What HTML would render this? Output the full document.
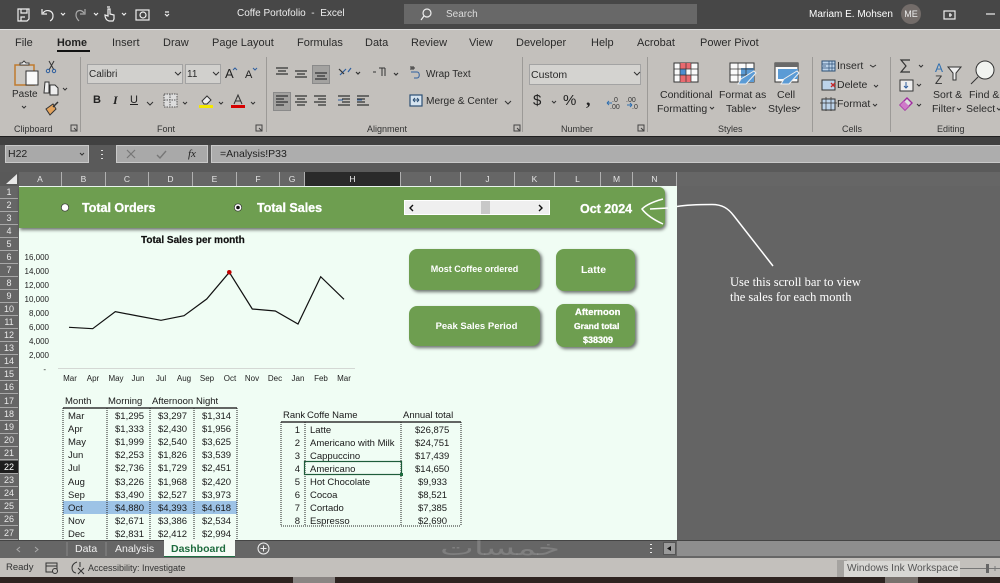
<!DOCTYPE html>
<html lang="en"><head><meta charset="utf-8"><title>Coffe Portofolio - Excel</title>
<style>
html,body{margin:0;padding:0}
body{width:1000px;height:583px;overflow:hidden;position:relative;background:#646464;font-family:"Liberation Sans",sans-serif;color:#222}
.b{position:absolute}
.t{position:absolute;white-space:nowrap;line-height:14px;font-size:10.5px}
.tab{font-size:11px;color:#2a2a2a;top:36px}
.g{font-size:9px;color:#333;top:122px}
.r{font-size:10.5px;color:#2a2a2a}
.rh{position:absolute;left:0;width:18px;height:12px;background:#666;border-bottom:1px solid #a8a8a8;color:#e8e8e8;font-size:9px;line-height:12px;text-align:center}
.ch{position:absolute;top:172px;height:14px;line-height:14px;color:#e4e4e4;font-size:8.5px;text-align:center;border-right:1px solid #b0b0b0;box-sizing:border-box}
.card{position:absolute;background:#6e9e50;border-radius:8px;box-shadow:2px 2px 3px rgba(0,0,0,.55);color:#fff;font-weight:bold;text-align:center}
.w{color:#fff;font-weight:bold;-webkit-text-stroke:.3px #fff}
.c{font-size:9.5px;color:#1a1a1a;transform:translateY(1px)}
.rgt{text-align:right}
.yl{width:40px;left:9px;text-align:right;font-size:8px;color:#222;transform:translateY(1px)}
.xl{width:24px;text-align:center;font-size:8px;color:#222;top:372px}
svg{position:absolute;left:0;top:0}
</style></head><body>

<!-- title bar -->
<div class="b" style="left:0;top:0;width:1000px;height:29px;background:#474747"></div>
<div class="b" style="left:404px;top:4px;width:293px;height:20px;background:#686868"></div>
<div class="t" style="left:237px;top:7px;color:#eee;font-size:10px">Coffe Portofolio&nbsp; -&nbsp; Excel</div>
<div class="t" style="left:446px;top:8px;color:#ddd;font-size:10px">Search</div>
<div class="t" style="left:809px;top:8px;color:#fff;font-size:10px">Mariam E. Mohsen</div>
<div class="b" style="left:901px;top:4px;width:20px;height:20px;border-radius:50%;background:#736c69;color:#eee;font-size:9px;line-height:20px;text-align:center">ME</div>

<!-- ribbon -->
<div class="b" style="left:0;top:29px;width:1000px;height:107px;background:#c3c0bc;border-top:1px solid #ddd;box-sizing:border-box"></div>
<div class="b" style="left:0;top:136px;width:1000px;height:9px;background:#414141;border-top:1px solid #1f1f1f;box-sizing:border-box"></div>
<div class="t tab" style="left:15px">File</div>
<div class="t tab" style="left:57px;font-weight:bold;color:#222;font-size:10.8px">Home</div>
<div class="b" style="left:57px;top:50px;width:33px;height:2px;background:#111"></div>
<div class="t tab" style="left:112px">Insert</div>
<div class="t tab" style="left:163px">Draw</div>
<div class="t tab" style="left:212px">Page Layout</div>
<div class="t tab" style="left:297px">Formulas</div>
<div class="t tab" style="left:365px">Data</div>
<div class="t tab" style="left:411px">Review</div>
<div class="t tab" style="left:469px">View</div>
<div class="t tab" style="left:516px">Developer</div>
<div class="t tab" style="left:591px">Help</div>
<div class="t tab" style="left:637px">Acrobat</div>
<div class="t tab" style="left:700px">Power Pivot</div>

<!-- ribbon separators -->
<div class="b" style="left:80px;top:57px;width:1px;height:75px;background:#9c9a97"></div>
<div class="b" style="left:266px;top:57px;width:1px;height:75px;background:#9c9a97"></div>
<div class="b" style="left:522px;top:57px;width:1px;height:75px;background:#9c9a97"></div>
<div class="b" style="left:647px;top:57px;width:1px;height:75px;background:#9c9a97"></div>
<div class="b" style="left:812px;top:57px;width:1px;height:75px;background:#9c9a97"></div>
<div class="b" style="left:890px;top:57px;width:1px;height:75px;background:#9c9a97"></div>

<!-- ribbon controls -->
<div class="b" style="left:87px;top:64px;width:96px;height:20px;background:#d1d0cd;border:1px solid #a3a3a3;box-sizing:border-box"></div>
<div class="b" style="left:185px;top:64px;width:36px;height:20px;background:#d1d0cd;border:1px solid #a3a3a3;box-sizing:border-box"></div>
<div class="b" style="left:529px;top:64px;width:112px;height:21px;background:#d4d3d0;border:1px solid #a3a3a3;box-sizing:border-box"></div>
<div class="b" style="left:312px;top:65px;width:18px;height:19px;background:#a3a2a0;border:1px solid #8a8a8a;box-sizing:border-box"></div>
<div class="b" style="left:273px;top:92px;width:18px;height:19px;background:#a3a2a0;border:1px solid #8a8a8a;box-sizing:border-box"></div>

<div class="t r" style="left:89px;top:68px;font-size:10px">Calibri</div>
<div class="t r" style="left:187px;top:68px;font-size:10px">11</div>
<div class="t r" style="left:531px;top:68px;font-size:10.5px">Custom</div>
<div class="t r" style="left:426px;top:68px;font-size:10px">Wrap Text</div>
<div class="t r" style="left:426px;top:95px;font-size:10.2px">Merge &amp; Center</div>
<div class="t r" style="left:12px;top:88px;font-size:10px">Paste</div>
<div class="t" style="left:93px;top:93px;font-weight:bold;font-size:11px">B</div>
<div class="t" style="left:113px;top:93px;font-style:italic;font-family:'Liberation Serif',serif;font-size:12px;font-weight:bold">I</div>
<div class="t" style="left:130px;top:93px;font-size:11px;text-decoration:underline">U</div>
<div class="t" style="left:225px;top:67px;font-size:13px">A</div>
<div class="t" style="left:245px;top:68px;font-size:11px">A</div>
<div class="t" style="left:533px;top:94px;font-size:15px">$</div>
<div class="t" style="left:563px;top:94px;font-size:15px">%</div>
<div class="t" style="left:586px;top:92px;font-size:18px;font-weight:bold;font-family:'Liberation Serif',serif">,</div>

<div class="t r" style="left:660px;top:88px;font-size:10.5px">Conditional</div>
<div class="t r" style="left:657px;top:102px;font-size:10.5px">Formatting</div>
<div class="t r" style="left:719px;top:88px;font-size:10.5px">Format as</div>
<div class="t r" style="left:726px;top:102px;font-size:10.5px">Table</div>
<div class="t r" style="left:777px;top:88px;font-size:10.5px">Cell</div>
<div class="t r" style="left:768px;top:102px;font-size:10.5px">Styles</div>
<div class="t r" style="left:837px;top:59px;font-size:10.5px">Insert</div>
<div class="t r" style="left:837px;top:78px;font-size:10.5px">Delete</div>
<div class="t r" style="left:837px;top:97px;font-size:10.5px">Format</div>
<div class="t r" style="left:933px;top:88px;font-size:10.5px">Sort &amp;</div>
<div class="t r" style="left:932px;top:102px;font-size:10.5px">Filter</div>
<div class="t r" style="left:969px;top:88px;font-size:10.5px">Find &amp;</div>
<div class="t r" style="left:966px;top:102px;font-size:10.5px">Select</div>

<div class="t g" style="left:14px">Clipboard</div>
<div class="t g" style="left:157px">Font</div>
<div class="t g" style="left:367px">Alignment</div>
<div class="t g" style="left:561px">Number</div>
<div class="t g" style="left:718px">Styles</div>
<div class="t g" style="left:842px">Cells</div>
<div class="t g" style="left:937px">Editing</div>

<!-- formula bar -->
<div class="b" style="left:0;top:145px;width:1000px;height:27px;background:#5a5a5a"></div>
<div class="b" style="left:5px;top:145px;width:84px;height:18px;background:#a9a9a9;border:1px solid #c9c9c9;box-sizing:border-box"></div>
<div class="b" style="left:116px;top:145px;width:92px;height:18px;background:#a9a9a9;border:1px solid #c9c9c9;box-sizing:border-box"></div>
<div class="b" style="left:211px;top:145px;width:789px;height:18px;background:#adadad;border:1px solid #c9c9c9;border-right:0;box-sizing:border-box"></div>
<div class="t" style="left:8px;top:147px;font-size:10.5px;color:#222">H22</div>
<div class="t" style="left:220px;top:147px;font-size:10.5px;color:#222">=Analysis!P33</div>
<div class="t" style="left:188px;top:147px;font-size:11px;font-style:italic;font-family:'Liberation Serif',serif;color:#222">fx</div>

<!-- grid headers -->
<div class="b" style="left:0;top:172px;width:1000px;height:14px;background:#666"></div>
<div class="b" style="left:0;top:172px;width:19px;height:14px;background:#595959"></div>
<div class="ch" style="left:19px;width:43px">A</div>
<div class="ch" style="left:62px;width:44px">B</div>
<div class="ch" style="left:106px;width:43px">C</div>
<div class="ch" style="left:149px;width:44px">D</div>
<div class="ch" style="left:193px;width:44px">E</div>
<div class="ch" style="left:237px;width:43px">F</div>
<div class="ch" style="left:280px;width:25px">G</div>
<div class="ch" style="left:305px;width:96px;background:#2a2a2a;color:#eee;padding-left:0">H</div>
<div class="ch" style="left:401px;width:60px">I</div>
<div class="ch" style="left:461px;width:54px">J</div>
<div class="ch" style="left:515px;width:40px">K</div>
<div class="ch" style="left:555px;width:46px">L</div>
<div class="ch" style="left:601px;width:32px">M</div>
<div class="ch" style="left:633px;width:44px">N</div>

<!-- row headers -->
<div class="rh" style="top:186px">1</div><div class="rh" style="top:199px">2</div><div class="rh" style="top:212px">3</div><div class="rh" style="top:225px">4</div><div class="rh" style="top:238px">5</div><div class="rh" style="top:251px">6</div><div class="rh" style="top:264px">7</div><div class="rh" style="top:277px">8</div><div class="rh" style="top:290px">9</div><div class="rh" style="top:303px">10</div><div class="rh" style="top:316px">11</div><div class="rh" style="top:329px">12</div><div class="rh" style="top:342px">13</div><div class="rh" style="top:355px">14</div><div class="rh" style="top:368px">15</div><div class="rh" style="top:381px">16</div><div class="rh" style="top:395px">17</div><div class="rh" style="top:408px">18</div><div class="rh" style="top:421px">19</div><div class="rh" style="top:434px">20</div><div class="rh" style="top:447px">21</div><div class="rh" style="top:461px;background:#1e1e1e;color:#fff">22</div><div class="rh" style="top:474px">23</div><div class="rh" style="top:487px">24</div><div class="rh" style="top:500px">25</div><div class="rh" style="top:513px">26</div><div class="rh" style="top:527px">27</div>

<!-- sheet -->
<div class="b" style="left:19px;top:186px;width:658px;height:354px;background:#f0fdf4"></div>
<div class="b" style="left:19px;top:187px;width:646px;height:41px;background:#6e9e50;border-radius:0 6px 6px 0;box-shadow:1px 2px 3px rgba(0,0,0,.55)"></div>

<div class="t w" style="left:82px;top:201px;font-size:12.5px">Total Orders</div>
<div class="t w" style="left:257px;top:201px;font-size:12.5px">Total Sales</div>
<div class="t w" style="left:580px;top:202px;font-size:12.5px">Oct 2024</div>
<div class="b" style="left:404px;top:200px;width:146px;height:15px;background:#efefef;box-sizing:border-box;border:1px solid #fff"></div>
<div class="b" style="left:481px;top:201px;width:9px;height:13px;background:#c8c8c8"></div>

<!-- cards -->
<div class="card" style="left:409px;top:249px;width:131px;height:41px;line-height:41px;font-size:9px">Most Coffee ordered</div>
<div class="card" style="left:556px;top:249px;width:79px;height:42px;line-height:40px;font-size:10.5px;padding-right:4px;box-sizing:border-box"><span style="position:relative;top:1px">Latte</span></div>
<div class="card" style="left:409px;top:306px;width:131px;height:40px;line-height:39px;font-size:9.500px;padding-left:4px;box-sizing:border-box"><span style="position:relative;top:1px">Peak Sales Period</span></div>
<div class="card" style="left:556px;top:304px;width:79px;height:43px"></div>
<div class="t w" style="left:575px;top:306px;font-size:9.5px">Afternoon</div>
<div class="t w" style="left:574px;top:319px;font-size:8.5px">Grand total</div>
<div class="t w" style="left:583px;top:333px;font-size:9px">$38309</div>

<!-- chart text -->
<div class="t" style="left:141px;top:234px;font-weight:bold;font-size:10px;color:#111;-webkit-text-stroke:.2px #111">Total Sales per month</div>
<div class="t yl" style="top:250px">16,000</div><div class="t yl" style="top:264px">14,000</div><div class="t yl" style="top:278px">12,000</div><div class="t yl" style="top:292px">10,000</div><div class="t yl" style="top:306px">8,000</div><div class="t yl" style="top:320px">6,000</div><div class="t yl" style="top:334px">4,000</div><div class="t yl" style="top:348px">2,000</div><div class="t yl" style="top:362px;left:6px">-</div>
<div class="t xl" style="left:58px">Mar</div><div class="t xl" style="left:81px">Apr</div><div class="t xl" style="left:104px">May</div><div class="t xl" style="left:126px">Jun</div><div class="t xl" style="left:149px">Jul</div><div class="t xl" style="left:172px">Aug</div><div class="t xl" style="left:195px">Sep</div><div class="t xl" style="left:218px">Oct</div><div class="t xl" style="left:240px">Nov</div><div class="t xl" style="left:263px">Dec</div><div class="t xl" style="left:286px">Jan</div><div class="t xl" style="left:309px">Feb</div><div class="t xl" style="left:332px">Mar</div>

<!-- left table -->
<div class="b" style="left:63px;top:501px;width:174px;height:13px;background:#9dc3e6"></div>
<div class="t c" style="left:65px;top:394px">Month</div><div class="t c" style="left:108px;top:394px">Morning</div><div class="t c" style="left:152px;top:394px">Afternoon</div><div class="t c" style="left:196px;top:394px">Night</div>
<div class="t c" style="left:68px;top:409px">Mar</div><div class="t c" style="left:68px;top:422px">Apr</div><div class="t c" style="left:68px;top:435px">May</div><div class="t c" style="left:68px;top:448px">Jun</div><div class="t c" style="left:68px;top:461px">Jul</div><div class="t c" style="left:68px;top:475px">Aug</div><div class="t c" style="left:68px;top:488px">Sep</div><div class="t c" style="left:68px;top:501px">Oct</div><div class="t c" style="left:68px;top:514px">Nov</div><div class="t c" style="left:68px;top:527px">Dec</div>
<div class="t c" style="left:115px;top:409px">$1,295</div><div class="t c" style="left:158px;top:409px">$3,297</div><div class="t c" style="left:202px;top:409px">$1,314</div>
<div class="t c" style="left:115px;top:422px">$1,333</div><div class="t c" style="left:158px;top:422px">$2,430</div><div class="t c" style="left:202px;top:422px">$1,956</div>
<div class="t c" style="left:115px;top:435px">$1,999</div><div class="t c" style="left:158px;top:435px">$2,540</div><div class="t c" style="left:202px;top:435px">$3,625</div>
<div class="t c" style="left:115px;top:448px">$2,253</div><div class="t c" style="left:158px;top:448px">$1,826</div><div class="t c" style="left:202px;top:448px">$3,539</div>
<div class="t c" style="left:115px;top:461px">$2,736</div><div class="t c" style="left:158px;top:461px">$1,729</div><div class="t c" style="left:202px;top:461px">$2,451</div>
<div class="t c" style="left:115px;top:475px">$3,226</div><div class="t c" style="left:158px;top:475px">$1,968</div><div class="t c" style="left:202px;top:475px">$2,420</div>
<div class="t c" style="left:115px;top:488px">$3,490</div><div class="t c" style="left:158px;top:488px">$2,527</div><div class="t c" style="left:202px;top:488px">$3,973</div>
<div class="t c" style="left:115px;top:501px">$4,880</div><div class="t c" style="left:158px;top:501px">$4,393</div><div class="t c" style="left:202px;top:501px">$4,618</div>
<div class="t c" style="left:115px;top:514px">$2,671</div><div class="t c" style="left:158px;top:514px">$3,386</div><div class="t c" style="left:202px;top:514px">$2,534</div>
<div class="t c" style="left:115px;top:527px">$2,831</div><div class="t c" style="left:158px;top:527px">$2,412</div><div class="t c" style="left:202px;top:527px">$2,994</div>

<!-- right table -->
<div class="t c" style="left:283px;top:408px">Rank</div><div class="t c" style="left:307px;top:408px">Coffe Name</div><div class="t c" style="left:403px;top:408px">Annual total</div>
<div class="t c rgt" style="left:280px;width:20px;top:423px">1</div><div class="t c" style="left:310px;top:423px">Latte</div><div class="t c" style="left:415px;top:423px">$26,875</div>
<div class="t c rgt" style="left:280px;width:20px;top:436px">2</div><div class="t c" style="left:310px;top:436px">Americano with Milk</div><div class="t c" style="left:415px;top:436px">$24,751</div>
<div class="t c rgt" style="left:280px;width:20px;top:449px">3</div><div class="t c" style="left:310px;top:449px">Cappuccino</div><div class="t c" style="left:415px;top:449px">$17,439</div>
<div class="t c rgt" style="left:280px;width:20px;top:462px">4</div><div class="t c" style="left:310px;top:462px">Americano</div><div class="t c" style="left:415px;top:462px">$14,650</div>
<div class="t c rgt" style="left:280px;width:20px;top:475px">5</div><div class="t c" style="left:310px;top:475px">Hot Chocolate</div><div class="t c" style="left:418px;top:475px">$9,933</div>
<div class="t c rgt" style="left:280px;width:20px;top:488px">6</div><div class="t c" style="left:310px;top:488px">Cocoa</div><div class="t c" style="left:418px;top:488px">$8,521</div>
<div class="t c rgt" style="left:280px;width:20px;top:501px">7</div><div class="t c" style="left:310px;top:501px">Cortado</div><div class="t c" style="left:418px;top:501px">$7,385</div>
<div class="t c rgt" style="left:280px;width:20px;top:514px">8</div><div class="t c" style="left:310px;top:514px">Espresso</div><div class="t c" style="left:418px;top:514px">$2,690</div>

<!-- annotation -->
<div class="t" style="left:730px;top:275px;color:#fff;font-family:'Liberation Serif',serif;font-size:12.5px">Use this scroll bar to view</div>
<div class="t" style="left:730px;top:290px;color:#fff;font-family:'Liberation Serif',serif;font-size:12.5px">the sales for each month</div>

<!-- sheet tabs -->
<div class="b" style="left:0;top:540px;width:1000px;height:18px;background:#666;border-top:1px solid #444;box-sizing:border-box"></div>
<div class="b" style="left:164px;top:540px;width:71px;height:16px;background:#f6fbf6;box-shadow:0 1px 0 #1e6e42"></div>
<div class="t" style="left:75px;top:542px;color:#f0f0f0;font-size:10.5px">Data</div>
<div class="t" style="left:115px;top:542px;color:#f0f0f0;font-size:10.5px">Analysis</div>
<div class="t" style="left:171px;top:542px;color:#1e6b3e;font-weight:bold;font-size:10.5px">Dashboard</div>
<div class="b" style="left:677px;top:541px;width:323px;height:15px;background:#8e8e8e"></div>
<div class="b" style="left:663px;top:542px;width:13px;height:13px;background:#9a9a9a;border:1px solid #555;box-sizing:border-box"></div>

<!-- status bar -->
<div class="b" style="left:0;top:558px;width:1000px;height:19px;background:#c3c0bc"></div>
<div class="t" style="left:440px;top:541px;font-size:20px;color:rgba(255,255,255,.17);font-family:'DejaVu Sans',sans-serif;transform:scaleX(1.8);transform-origin:left center">خمسات</div>
<div class="t" style="left:6px;top:561px;font-size:9.5px;color:#333">Ready</div>
<div class="t" style="left:88px;top:561px;font-size:9px;color:#333">Accessibility: Investigate</div>
<div class="b" style="left:837px;top:560px;width:10px;height:17px;background:#a5a3a0"></div>
<div class="b" style="left:844px;top:561px;width:116px;height:16px;background:#d8d7d4"></div>
<div class="t" style="left:847px;top:562px;font-size:10.2px;color:#555">Windows Ink Workspace</div>
<div class="b" style="left:0;top:577px;width:1000px;height:6px;background:#2e2320"></div>
<div class="b" style="left:293px;top:577px;width:42px;height:6px;background:#8a8583"></div>
<div class="b" style="left:885px;top:577px;width:33px;height:6px;background:#78716d"></div>

<svg width="1000" height="583" viewBox="0 0 1000 583" fill="none">
<!-- QAT -->
<g stroke="#eee" stroke-width="1.2">
<path d="M18 9h11v10l-2 2H18z"/><path d="M21 9v4h6V9M21 21v-4h4"/>
<path d="M42 9v5h5M43 13c3-4 10-3 10 3 0 2-1 4-3 5"/>
<path d="M85 9v5h-5M84 13c-3-4-8-3-8 2 0 3 2 5 3 6" stroke="#aaa"/>
<path d="M107 20c-2-2-2-4-2-5l3 1V9h2v5l4 1v4l-1 2h-4zM107 7h3"/>
<rect x="136" y="10" width="13" height="10"/><circle cx="143" cy="15" r="3"/>
<path d="M165 12h4M165 14l2 2 2-2"/>
<path d="M61 13l2 2 2-2M94 13l2 2 2-2M122 13l2 2 2-2"/>
<circle cx="427" cy="13" r="4"/><path d="M424 16l-3 4"/>
<rect x="944" y="11" width="11" height="8"/><path d="M949 15h3M950 13v4"/>
<path d="M986 14h9"/>
</g>
<!-- Clipboard -->
<rect x="15" y="65" width="19" height="20" fill="#c9c6c1" stroke="#c07a2e" stroke-width="1.5"/>
<path d="M20 65v-2h2l2-2 2 2h3v2z" fill="#eee" stroke="#444"/>
<rect x="26" y="71" width="12" height="14" fill="#fafafa" stroke="#333"/>
<path d="M49 61l5 9M54 61l-5 9" stroke="#333"/><circle cx="48" cy="71" r="1.7" stroke="#2f5f9f"/><circle cx="54" cy="71" r="1.7" stroke="#2f5f9f"/>
<path d="M45 82h4l0 11h-5zM50 85h5l3 3v7h-8z" fill="#eee" stroke="#333"/>
<path d="M63 88l2 2 2-2M22 106l2 2 2-2" stroke="#333"/>
<path d="M46 109l7-5 3 5-6 6z" fill="#e4a35c" stroke="#333"/><path d="M53 107l5-5" stroke="#333" stroke-width="1.5"/>
<path d="M71 125h6v6h-6zM74 128l3 3" stroke="#444"/>
<path d="M175 72l3 3 3-3M213 72l3 3 3-3M634 72l3 3 3-3" stroke="#333"/>
<path d="M233 70l2-2 2 2M253 68l2 2 2-2" stroke="#2f5f9f"/>
<!-- Font -->
<path d="M147 102l3 3 3-3M183 102l2 2 2-2M219 102l2 2 2-2M251 102l2 2 2-2" stroke="#333"/>
<rect x="164" y="94" width="13" height="13" fill="#ddd" stroke="#555" stroke-dasharray="1.5 1"/>
<path d="M164 100h13M170 94v13" stroke="#555" stroke-dasharray="1.5 1"/>
<rect x="199" y="105" width="14" height="3" fill="#f4e800"/><path d="M202 101l5-5 4 4-4 4h-3z" fill="#eee" stroke="#333"/>
<rect x="231" y="105" width="14" height="3" fill="#d60000"/><path d="M234 104l4-9 4 9M235 101h6" stroke="#333"/>
<path d="M256 125h6v6h-6zM259 128l3 3" stroke="#444"/>
<!-- Alignment -->
<g stroke="#333" stroke-width="1.2">
<path d="M276 68h12M278 71h8M276 74h12M295 71h12M297 74h8M295 77h12M315 73h12M317 76h8M315 79h12"/>
<path d="M276 96h12M276 99h8M276 102h12M276 105h8M295 96h12M297 99h8M295 102h12M297 105h8M314 96h12M318 99h8M314 102h12M318 105h8"/>
<path d="M338 96h12M342 99h8M342 102h8M338 105h12M357 96h12M357 99h8M357 102h8M357 105h12"/>
<path d="M340 75l6-6M348 72l3-4" stroke="#2f5f9f"/><path d="M339 69l5 5" /><path d="M356 72l2 2 2-2M394 73l2 2 2-2"/>
</g>
<path d="M338 100h5M357 100h5" stroke="#2f5f9f"/>
<path d="M373 72h3M379 68h6M382 68v8M385 68v8" stroke="#333"/>
<path d="M411 72h6c3 0 3 6 0 6h-3" stroke="#2f5f9f"/>
<path d="M411 70v-4M411 68h4M413 70v-4" stroke="#333"/>
<rect x="410" y="95" width="12" height="11" fill="#d6e4f0" stroke="#2c4f74" stroke-width="1.2"/><path d="M413 100h6M413 100l2-2M413 100l2 2M419 100l-2-2M419 100l-2 2" stroke="#2c4f74"/>
<path d="M505 101l3 3 3-3M552 101l2 2 2-2" stroke="#333"/>
<path d="M514 125h6v6h-6zM517 128l3 3M638 125h6v6h-6zM641 128l3 3" stroke="#444"/>
<!-- Number -->
<path d="M607 103h5M607 103l2-2M607 103l2 2M627 105h5M632 105l-2-2M632 105l-2 2" stroke="#2f6fb0"/>
<text x="612" y="102" font-size="7" fill="#333" font-family="Liberation Sans">.0</text>
<text x="610" y="109" font-size="7" fill="#333" font-family="Liberation Sans">.00</text>
<text x="626" y="102" font-size="7" fill="#333" font-family="Liberation Sans">.00</text>
<text x="632" y="109" font-size="7" fill="#333" font-family="Liberation Sans">.0</text>
<!-- Styles -->
<rect x="674" y="63" width="24" height="19" fill="#fafafa" stroke="#333"/>
<rect x="680" y="63" width="11" height="6" fill="#e96a6f"/><rect x="680" y="69" width="6" height="6" fill="#4e8dd0"/><rect x="680" y="75" width="11" height="7" fill="#e96a6f"/>
<path d="M674 69h24M674 75h24M680 63v19M686 63v19M691 63v19" stroke="#333" stroke-width=".7"/>
<rect x="730" y="63" width="24" height="19" fill="#fafafa" stroke="#333"/><rect x="741" y="68" width="13" height="14" fill="#5b9bd5"/>
<path d="M730 69h24M730 75h24M738 63v19M746 63v19" stroke="#333" stroke-width=".7"/>
<path d="M738 84l3-5 13-8 2 2-10 11z" fill="#5b9bd5" stroke="#eee"/>
<rect x="775" y="63" width="23" height="19" fill="#fafafa" stroke="#333"/><rect x="778" y="69" width="20" height="10" fill="#5b9bd5"/><rect x="775" y="63" width="23" height="4" fill="#6a6a6a"/>
<path d="M781 84l3-5 13-8 2 2-10 11z" fill="#5b9bd5" stroke="#eee"/>
<path d="M710 107l2 2 2-2M752 107l2 2 2-2M796 107l2 2 2-2M870 65l3 2 3-2M874 85l2 2 2-2M873 104l2 2 2-2" stroke="#333"/>
<!-- Cells -->
<rect x="822" y="61" width="13" height="10" fill="#bcd3ea" stroke="#2c4f74"/><path d="M826 66h-3M829 61v10M832 61v10M822 64h13M822 68h13" stroke="#2c4f74" stroke-width=".7"/>
<rect x="822" y="80" width="13" height="10" fill="#bcd3ea" stroke="#333"/><path d="M831 83l4 4M835 83l-4 4" stroke="#c62828" stroke-width="1.3"/>
<rect x="822" y="99" width="13" height="11" fill="#bcd3ea" stroke="#333"/><path d="M826 97v14M831 97v14M820 103h17" stroke="#333" stroke-width=".7"/>
<!-- Editing -->
<path d="M910 60h-9l5 6-5 6h9" stroke="#333" stroke-width="1.2"/>
<path d="M919 65l2 2 2-2M917 84l2 2 2-2M917 104l2 2 2-2M957 108l2 2 2-2M997 108l2 2 2-2" stroke="#333"/>
<rect x="900" y="80" width="13" height="11" fill="#eee" stroke="#333"/><path d="M906 82v6M904 86l2 2 2-2" stroke="#2f5f9f"/>
<path d="M900 105l7-7 5 5-7 7z" fill="#ddd" stroke="#a02aa0" stroke-width="1.4"/><path d="M900 105l4-4 5 5-4 4z" fill="#cf7ac9"/>
<text x="935" y="72" font-size="12" fill="#2f6fb0" font-family="Liberation Sans">A</text>
<text x="935" y="84" font-size="12" fill="#333" font-family="Liberation Sans">Z</text>
<path d="M948 67h13l-5 6v7h-3v-7z" fill="#eee" stroke="#333"/>
<circle cx="985" cy="70" r="9" fill="#f1f3f0" stroke="#333"/><path d="M978 77l-7 7" stroke="#333"/>
<!-- Formula -->
<path d="M80 153l2 2 2-2" stroke="#333"/>
<path d="M102 150v1M102 154v1M102 158v1" stroke="#ddd" stroke-width="2"/>
<path d="M127 150l8 8M135 150l-8 8" stroke="#777" stroke-width="1.2"/>
<path d="M157 155l3 3 6-7" stroke="#777" stroke-width="1.4"/>
<!-- corner -->
<path d="M17 174v10H6z" fill="#e8e8e8"/>
<!-- radios -->
<circle cx="65" cy="207.5" r="3.7" fill="#fff" stroke="#333" stroke-width=".7"/>
<circle cx="238" cy="207.5" r="3.7" fill="#fff" stroke="#333" stroke-width=".7"/><circle cx="238" cy="207.5" r="1.8" fill="#111"/>
<!-- scrollbar arrows -->
<path d="M413 205l-3 3 3 3M539 205l3 3-3 3" stroke="#111" stroke-width="1.4"/>
<!-- chart -->
<path d="M58 368.5H355" stroke="#d4d8d4"/>
<path d="M69 327.3L92.7 328.7 115.3 311.7 138 316 161 320.3 184 315.7 206.7 299 229.3 272.3 252.3 309 275.3 311 298 324 320.7 276.7 344 299.3" stroke="#111" stroke-width="1.2"/>
<circle cx="229.3" cy="272.3" r="2.3" fill="#c00000"/>
<!-- left table lines -->
<path d="M63 408H237" stroke="#333" stroke-width="1.6"/>
<path d="M63 408V540M107 408V540M150 408V540M194 408V540M237 408V540" stroke="#222" stroke-dasharray="1 1"/>
<!-- right table lines -->
<path d="M281 422H461" stroke="#333" stroke-width="1.6"/>
<path d="M281 422V526M305 422V526M401 422V526M461 422V526M281 526H461" stroke="#222" stroke-dasharray="1 1"/>
<rect x="304.5" y="461.5" width="97" height="13" stroke="#1e5c3a" stroke-width="1.2"/>
<rect x="400" y="473" width="3" height="3" fill="#1e6b3e"/>
<!-- arrow annotation -->
<path d="M663 199C652 202 645 206 642 209 645 213 652 219 663 224" stroke="#fff" stroke-width="1.5"/>
<path d="M650 209L668 208M677 206.500C686 205 700 204.500 712 204.500 722 204.500 728 208 734 216L773 266" stroke="#fff" stroke-width="1.5"/>
<!-- sheet tab bits -->
<path d="M20 547l-3 2.500 3 2.500M35 547l3 2.500-3 2.500" stroke="#aaa"/>
<path d="M67 542v14M106 542v14" stroke="#888"/>
<circle cx="263.500" cy="548.500" r="5.500" stroke="#eee"/><path d="M260.500 548.500h6M263.500 545.500v6" stroke="#eee"/>
<path d="M651 544v1M651 548v1M651 552v1" stroke="#eee" stroke-width="2"/>
<path d="M671 546l-4 2.500 4 2.500z" fill="#111"/>
<!-- status icons -->
<rect x="46" y="563" width="11" height="9" stroke="#333"/><path d="M46 566h11" stroke="#333"/>
<circle cx="55" cy="571" r="2.500" fill="#c3c0bc" stroke="#333"/>
<path d="M77 562c-3 1-5 3-5 6 0 3 2 5 4 5M80 562v5M78 568l6 6M84 568l-6 6" stroke="#333"/>
<path d="M960 568.500h40" stroke="#777"/><rect x="986" y="564" width="3" height="9" fill="#666"/><path d="M995 566v5" stroke="#777"/>
</svg>
</body></html>
